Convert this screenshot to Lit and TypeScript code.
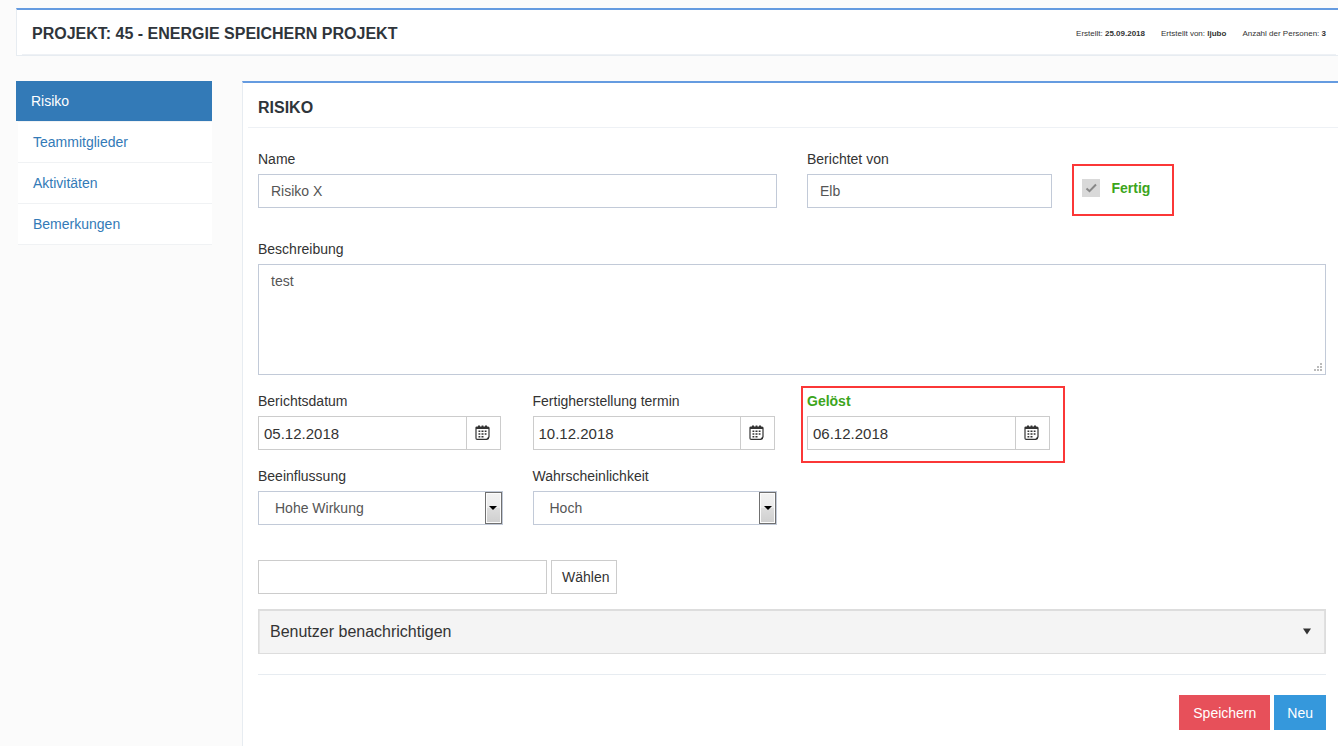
import { LitElement, html, css, svg } from "lit";
import { customElement, property } from "lit/decorators.js";

const calendarIcon = html`<svg class="icon" width="15" height="15" viewBox="0 0 15 15" aria-hidden="true">
  ${svg`
    <path d="M1 3Q1 2 2 2H13Q14 2 14 3V12L12 14.4H2.2Q1 14.4 1 13.2Z" fill="#fff" stroke="#333" stroke-width="1.2" />
    <path d="M1 2H14V4H1Z" fill="#333" />
    <path d="M3 .4H5V3H3ZM6.6 .4H8.4V3H6.6ZM10 .4H12V3H10Z" fill="#333" />
    <path d="M3.5 5.5H5.3V7H3.5ZM6.5 5.5H8.5V7H6.5ZM9.7 5.5H11.5V7H9.7ZM3.5 8.2H5.3V9.8H3.5ZM6.5 8.2H8.5V9.8H6.5ZM9.7 8.2H11.5V9.8H9.7ZM3.5 11H5.3V12.5H3.5ZM6.5 11H8.5V12.5H6.5Z" fill="#333" />
    <path d="M11.2 14.2L14 11.4V14.2Z" fill="#333" />
  `}
</svg>`;

const base = css`
  * { box-sizing: border-box; }
  input, textarea, select, button { font: inherit; color: inherit; border-radius: 0; margin: 0; }
  .label { display: block; line-height: 20px; margin-bottom: 5px; color: #333; }
`;

@customElement("date-field")
export class DateField extends LitElement {
  @property() label = "";
  @property() value = "";
  @property({ type: Boolean }) marked = false;

  static styles = [base, css`
    :host { display: block; position: relative; }
    :host([marked]) .label { color: #3ca51c; font-weight: bold; }
    :host([marked])::after {
      content: ""; position: absolute; inset: -5px -13px -13px -6px;
      border: 2px solid #fb3737; pointer-events: none;
    }
    .group { display: flex; height: 34px; margin-right: 2px; border: 1px solid #ccc; background: #fff; }
    .date { flex: 1; min-width: 0; border: 0; padding: 2px 5px 0; color: #333; font-size: 15px; background: none; }
    .pick { width: 34px; padding: 0 2px 2px 0; border: 0; border-left: 1px solid #ccc; background: none; display: grid; place-items: center; }
  `];

  render() {
    return html`
      <label class="label" for="date">${this.label}</label>
      <div class="group">
        <input class="date" id="date" type="text" .value=${this.value} />
        <button class="pick" type="button" aria-label="Kalender">${calendarIcon}</button>
      </div>`;
  }
}

@customElement("select-field")
export class SelectField extends LitElement {
  @property() label = "";
  @property() value = "";

  static styles = [base, css`
    :host { display: block; }
    .wrap { position: relative; }
    .select {
      display: block; appearance: none; width: 100%; height: 34px; padding: 0 30px 0 16px;
      border: 1px solid #c2cad8; background: #fff; color: #555;
    }
    .arrow {
      position: absolute; inset: 1px 1px 1px auto; width: 17px; pointer-events: none;
      border: 1px solid #707070; display: grid; place-items: center;
      box-shadow: inset 0 0 0 1px #fcfcfc;
      background: linear-gradient(#f2f2f2 0%, #ebebeb 50%, #dddddd 50%, #cfcfcf 100%);
    }
  `];

  render() {
    return html`
      <label class="label" for="choice">${this.label}</label>
      <div class="wrap">
        <select class="select" id="choice"><option>${this.value}</option></select>
        <span class="arrow"><svg width="8" height="4" viewBox="0 0 8 4" aria-hidden="true"><path d="M0 0H8L4 4Z" fill="#000" /></svg></span>
      </div>`;
  }
}

@customElement("app-root")
export class AppRoot extends LitElement {
  static styles = [base, css`
    :host {
      display: flex; flex-direction: column; gap: 25px; min-height: 100vh; box-sizing: border-box;
      padding: 8px 0 0 16px; background: #fbfbfb; color: #333;
      font: 14px/20px "Liberation Sans", Arial, sans-serif;
    }
    .panel { background: #fff; border: 1px solid #e7ecf1; border-top: 2px solid #659be0; border-right: 0; }
    .project { padding: 0 2px 0 5px; }
    .project-head {
      display: flex; align-items: center; justify-content: space-between;
      padding: 4px 10px 0; height: 45px; border-bottom: 1px solid #eef1f5;
    }
    .title { margin: 0; font-size: 16px; line-height: 20px; font-weight: bold; color: #2f353b; }
    .facts { display: flex; gap: 16px; font-size: 8px; line-height: 10px; color: #333; }
    .body { flex: 1; display: grid; grid-template-columns: 196px minmax(0, 1fr); gap: 30px; }
    .nav { margin: 0; padding: 0; list-style: none; }
    .item { margin-left: 2px; border-bottom: 1px solid #f0f2f4; background: #fff; }
    .link { display: block; height: 40px; padding: 10px 15px; color: #337ab7; text-decoration: none; }
    .active { background: #337ab7; color: #fff; margin-left: -2px; }
    .form-panel { padding: 0 0 16px 5px; border-bottom: 0; }
    .form-head { padding: 15px 10px 9px; border-bottom: 1px solid #eef1f5; }
    .form { padding: 21px 12px 0 10px; }
    .row { display: grid; grid-template-columns: repeat(4, minmax(0, 1fr)); column-gap: 30px; margin-bottom: 16px; }
    .row-wide { margin-bottom: 31px; }
    .span2 { grid-column: span 2; }
    .control { display: block; width: 100%; height: 34px; padding: 0 12px; border: 1px solid #c2cad8; background: #fff; color: #555; }
    .area-wrap { margin-bottom: 16px; }
    .area { height: 111px; padding: 6px 12px; resize: vertical; }
    .area::-webkit-resizer {
      background: url("data:image/svg+xml,%3Csvg xmlns='http://www.w3.org/2000/svg' width='15' height='15'%3E%3Cpath d='M10 4h2v2h-2zM7 7h2v2H7zM10 7h2v2h-2zM4 10h2v2H4zM7 10h2v2H7zM10 10h2v2h-2z' fill='%23bbb'/%3E%3C/svg%3E") no-repeat right bottom;
    }
    .done { position: relative; justify-self: start; align-self: center; margin-top: 18px; display: flex; align-items: center; gap: 12px; }
    .done::after {
      content: ""; position: absolute; inset: -14px -24px -18px -10px;
      border: 2px solid #fb3737; pointer-events: none;
    }
    .check {
      appearance: none; width: 18px; height: 18px; background: #d9d9d9 url("data:image/svg+xml,%3Csvg xmlns='http://www.w3.org/2000/svg' viewBox='0 0 18 18'%3E%3Cpath d='M4.5 9.5L7.5 12.2L14 5.5' fill='none' stroke='%23888' stroke-width='2'/%3E%3C/svg%3E");
    }
    .done-label { color: #3ca51c; font-weight: bold; line-height: 20px; }
    .upload { display: flex; gap: 4px; margin: 35px 0 15px; }
    .file { width: 289px; border-color: #ccc; }
    .choose { height: 34px; padding: 0 7px 0 10px; border: 1px solid #ccc; background: #fff; color: #333; }
    .notify {
      display: flex; align-items: center; justify-content: space-between; width: 100%; height: 45px;
      padding: 0 14px 0 11px; border: 1px solid #ddd; box-shadow: inset 0 1px #ddd, inset 1px 0 #e6e6e6, inset -1px 0 #e0e0e0;
      background: #f4f4f4; color: #333; font-size: 16px; text-align: left;
    }
    .rule { margin: 20px 0; border: 0; border-top: 1px solid #e7ecf1; }
    .actions { display: flex; justify-content: flex-end; gap: 4px; }
    .btn { height: 35px; padding: 0 13px; border: 0; color: #fff; }
    .save { padding: 0 14px; background: #e7505a; }
    .new { background: #3598dc; }
  `];

  render() {
    return html`
      <header class="panel project">
        <div class="project-head">
          <h1 class="title">PROJEKT: 45 - ENERGIE SPEICHERN PROJEKT</h1>
          <div class="facts">
            <span>Erstellt: <b>25.09.2018</b></span>
            <span>Ertstellt von: <b>ljubo</b></span>
            <span>Anzahl der Personen: <b>3</b></span>
          </div>
        </div>
      </header>
      <div class="body">
        <nav>
          <ul class="nav">
            <li class="item"><a class="link active" href="#risiko">Risiko</a></li>
            <li class="item"><a class="link" href="#team">Teammitglieder</a></li>
            <li class="item"><a class="link" href="#aktivitaeten">Aktivitäten</a></li>
            <li class="item"><a class="link" href="#bemerkungen">Bemerkungen</a></li>
          </ul>
        </nav>
        <main class="panel form-panel">
          <div class="form-head"><h2 class="title">RISIKO</h2></div>
          <form class="form">
            <div class="row row-wide">
              <div class="span2">
                <label class="label" for="name">Name</label>
                <input class="control" id="name" type="text" value="Risiko X" />
              </div>
              <div>
                <label class="label" for="reporter">Berichtet von</label>
                <input class="control" id="reporter" type="text" value="Elb" />
              </div>
              <div class="done">
                <input class="check" id="done" type="checkbox" checked disabled />
                <label class="done-label" for="done">Fertig</label>
              </div>
            </div>
            <div class="area-wrap">
              <label class="label" for="description">Beschreibung</label>
              <textarea class="control area" id="description" .value=${"test"}></textarea>
            </div>
            <div class="row">
              <date-field label="Berichtsdatum" value="05.12.2018"></date-field>
              <date-field label="Fertigherstellung termin" value="10.12.2018"></date-field>
              <date-field label="Gelöst" value="06.12.2018" marked></date-field>
            </div>
            <div class="row">
              <select-field label="Beeinflussung" value="Hohe Wirkung"></select-field>
              <select-field label="Wahrscheinlichkeit" value="Hoch"></select-field>
            </div>
            <div class="upload">
              <input class="control file" type="text" aria-label="Datei" />
              <button class="choose" type="button">Wählen</button>
            </div>
            <button class="notify" type="button" aria-expanded="false">
              <span>Benutzer benachrichtigen</span>
              <svg width="8" height="7" viewBox="0 0 8 7" aria-hidden="true"><path d="M0 .5H8L4 6.5Z" fill="#333" /></svg>
            </button>
            <hr class="rule" />
            <div class="actions">
              <button class="btn save" type="button">Speichern</button>
              <button class="btn new" type="button">Neu</button>
            </div>
          </form>
        </main>
      </div>`;
  }
}
